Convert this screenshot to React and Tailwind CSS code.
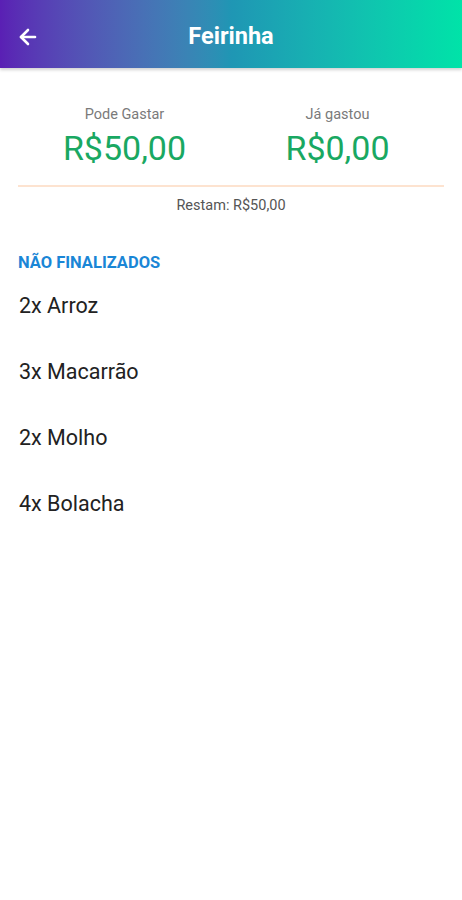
import { ArrowLeft } from "lucide-react";

const items = ["2x Arroz", "3x Macarrão", "2x Molho", "4x Bolacha"];

export default function App() {
  return (
    <div className="min-h-[900px] bg-white font-['Roboto',sans-serif]">
      <header className="h-[68px] flex items-center px-4 pt-[5px] bg-gradient-to-r from-[#5a1fb4] via-[#1f96b4] to-[#00e3a8] shadow-[0_2px_3px_rgba(0,0,0,0.18)]">
        <ArrowLeft className="w-6 h-6 text-white" strokeWidth={2.6} />
        <h1 className="flex-1 text-center text-white text-[23.5px] font-bold pr-6">
          Feirinha
        </h1>
      </header>

      <section className="px-[18px] pt-[38px]">
        <div className="grid grid-cols-2 pb-[15px]">
          <div className="flex flex-col items-center">
            <span className="text-[14.5px] text-[#7a7a7a] leading-[18px]">Pode Gastar</span>
            <span className="text-[34px] text-[#19a862] leading-[44px] mt-[2px]">R$50,00</span>
          </div>
          <div className="flex flex-col items-center">
            <span className="text-[14.5px] text-[#7a7a7a] leading-[18px]">Já gastou</span>
            <span className="text-[34px] text-[#19a862] leading-[44px] mt-[2px]">R$0,00</span>
          </div>
        </div>
        <div className="border-t-2 border-[#fde3d0]" />
        <p className="text-center text-[14.5px] text-[#555] mt-[8px]">Restam: R$50,00</p>

        <h2 className="mt-[34px] text-[16.5px] font-bold text-[#1a86d6]">NÃO FINALIZADOS</h2>
        <ul className="mt-[16px] flex flex-col gap-[39px]">
          {items.map((it) => (
            <li key={it} className="text-[21.5px] text-[#222] leading-[27px] pl-[1px]">
              {it}
            </li>
          ))}
        </ul>
      </section>
    </div>
  );
}
